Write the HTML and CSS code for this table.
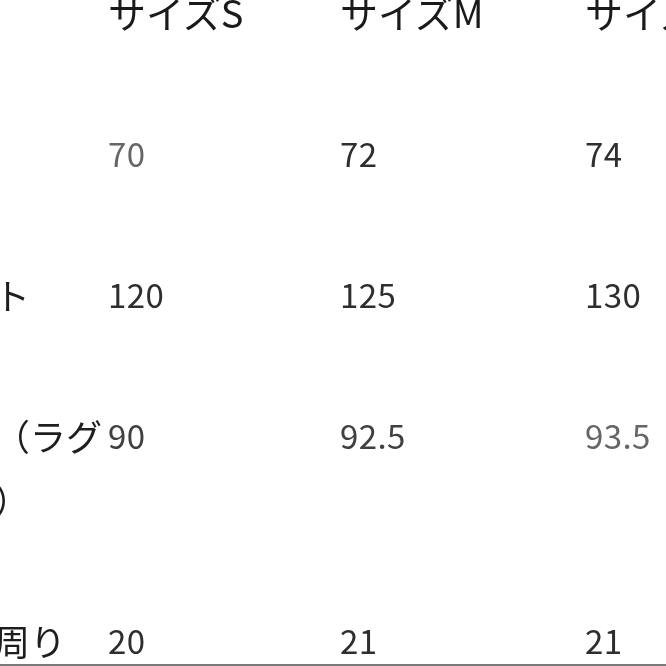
FILE: index.html
```html
<!DOCTYPE html>
<html lang="ja">
<head>
<meta charset="utf-8">
<title>サイズ表</title>
<link rel="stylesheet" href="styles.css">
</head>
<body>
<div class="sheet">
  <div class="row head">
    <div class="cell label"></div>
    <div class="cell">サイズS</div>
    <div class="cell">サイズM</div>
    <div class="cell">サイズL</div>
  </div>
  <div class="row">
    <div class="cell label">着丈</div>
    <div class="cell num light">70</div>
    <div class="cell num">72</div>
    <div class="cell num">74</div>
  </div>
  <div class="row">
    <div class="cell label">バスト</div>
    <div class="cell num">120</div>
    <div class="cell num">125</div>
    <div class="cell num">130</div>
  </div>
  <div class="row">
    <div class="cell label">袖丈（ラグラン）</div>
    <div class="cell num mid">90</div>
    <div class="cell num mid">92.5</div>
    <div class="cell num light">93.5</div>
  </div>
  <div class="row">
    <div class="cell label">袖口周り</div>
    <div class="cell num">20</div>
    <div class="cell num">21</div>
    <div class="cell num">21</div>
  </div>
  <div class="rule"></div>
</div>
</body>
</html>
```
FILE: styles.css
```css
html, body {
  margin: 0;
  padding: 0;
  background: #ffffff;
  overflow: hidden;
}
body {
  width: 666px;
  height: 666px;
  font-family: "Noto Sans CJK JP", "Noto Sans", sans-serif;
  color: #222222;
}
.sheet {
  margin-top: -20px;
  margin-left: -78px;
  width: 900px;
  display: flex;
  flex-direction: column;
  gap: 77px;
  filter: blur(0.4px);
}
.row {
  display: grid;
  grid-template-columns: 186px 232px 245px 237px;
  align-items: start;
}
.cell {
  font-size: 36px;
  line-height: 64px;
  color: #1e1e1e;
}
.head .cell {
  font-size: 38px;
  color: #1a1a1a;
}
.label {
  font-size: 36px;
  color: #1e1e1e;
}
.num {
  font-size: 33px;
  letter-spacing: 0.4px;
  color: #2e2e2e;
}
.num.mid {
  color: #404040;
}
.num.light {
  color: #666666;
}
.rule {
  margin-top: -85px;
  height: 2px;
  background: #7a7a7a;
}
```
